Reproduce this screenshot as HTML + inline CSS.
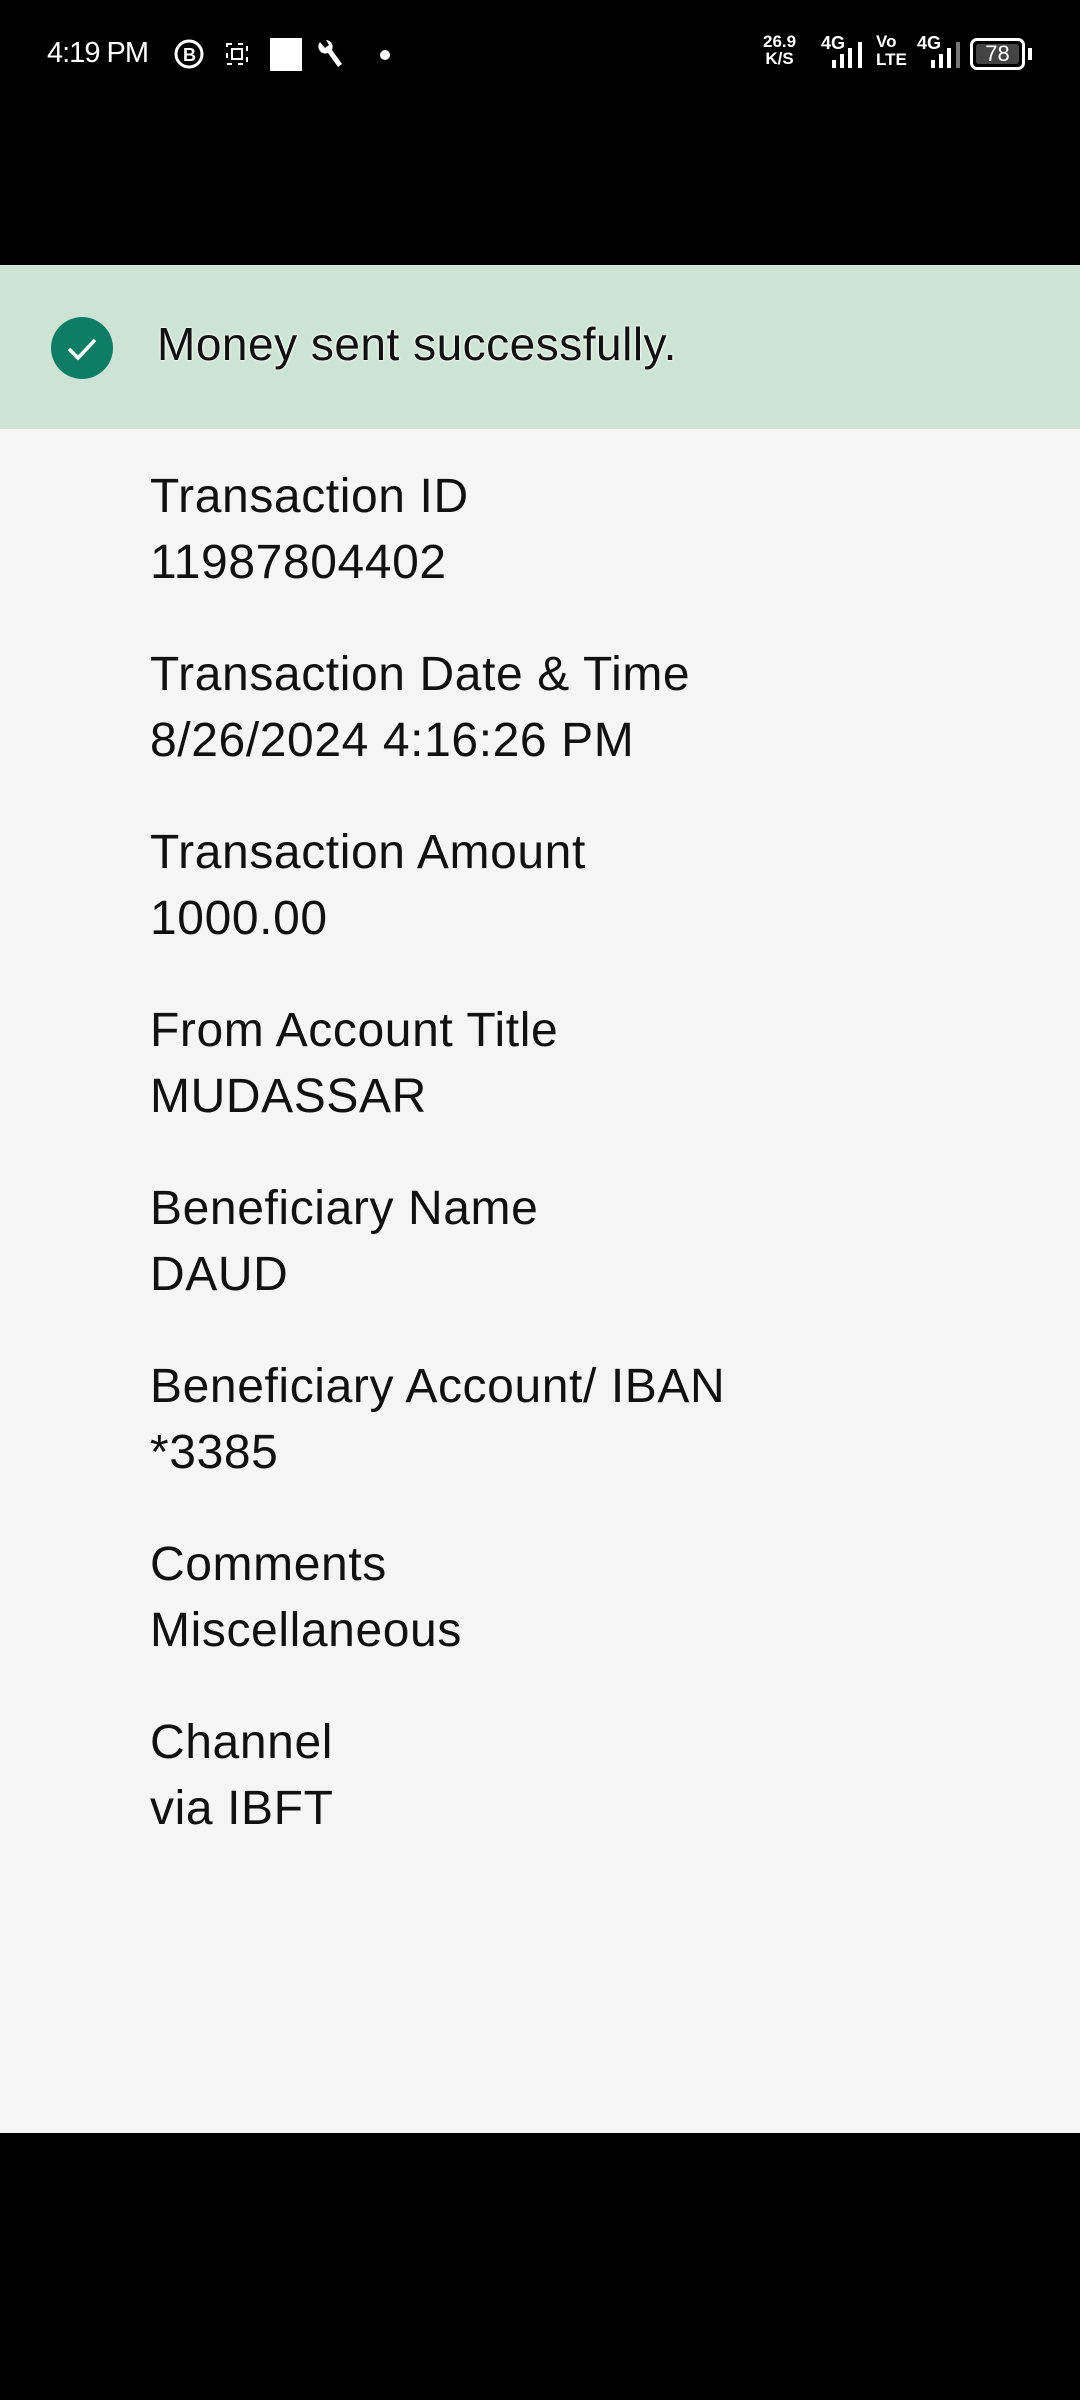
<!DOCTYPE html>
<html><head><meta charset="utf-8"><style>
*{margin:0;padding:0;box-sizing:border-box}
body{width:1080px;height:2400px;background:#000;position:relative;overflow:hidden;font-family:"Liberation Sans",sans-serif}
.sb{position:absolute;color:#fff}
.banner{position:absolute;left:0;top:265px;width:1080px;height:164px;background:#cde3d5}
.content{position:absolute;left:0;top:429px;width:1080px;height:1704px;background:#f5f5f5}
.msg{position:absolute;left:157px;top:317px;font-size:46px;color:#111;text-shadow:0 0 3px #fff,0 0 2px #fff;letter-spacing:0.5px}
.item{position:absolute;left:150px;font-size:48px;color:#111;line-height:66px;letter-spacing:0.6px}
</style></head><body>
<div class="sb" style="left:47px;top:37px;font-size:29px;letter-spacing:-1px">4:19 PM</div>
<svg class="sb" style="left:170px;top:38px" width="220" height="34" viewBox="0 0 220 34">
 <circle cx="19" cy="16" r="13" fill="none" stroke="#fff" stroke-width="3"/>
 <text x="13" y="23" font-size="18" font-weight="bold" fill="#fff" font-family="Liberation Sans">B</text>
 <rect x="57" y="6" width="20" height="20" fill="none" stroke="#fff" stroke-width="2" stroke-dasharray="5 6"/>
 <rect x="62" y="11" width="10" height="10" fill="none" stroke="#fff" stroke-width="2"/>
 <rect x="100" y="0" width="32" height="33" fill="#fff"/>
 <path d="M150 4 a7 7 0 0 0 8 11 l10 14 4 -3 -10 -14 a7 7 0 0 0 -6 -10 l3 5 -4 3z" fill="#fff"/>
 <circle cx="215" cy="17" r="5" fill="#fff"/>
</svg>
<div class="sb" style="left:763px;top:33px;font-size:17px;font-weight:bold;line-height:17px;text-align:center">26.9<br>K/S</div>
<div class="sb" style="left:821px;top:33px;font-size:18px;font-weight:bold">4G</div>
<svg class="sb" style="left:820px;top:40px" width="150" height="32">
 <rect x="12" y="20" width="4" height="8" fill="#fff"/><rect x="20" y="14" width="4" height="14" fill="#fff"/><rect x="28" y="8" width="4" height="20" fill="#fff"/><rect x="38" y="2" width="4" height="26" fill="#fff"/>
 <rect x="111" y="20" width="4" height="8" fill="#fff"/><rect x="119" y="14" width="4" height="14" fill="#fff"/><rect x="127" y="8" width="4" height="20" fill="#fff"/><rect x="136" y="2" width="4" height="26" fill="#777"/>
</svg>
<div class="sb" style="left:876px;top:33px;font-size:17px;font-weight:bold;line-height:18px">Vo<br>LTE</div>
<div class="sb" style="left:917px;top:33px;font-size:18px;font-weight:bold">4G</div>
<div class="sb" style="left:970px;top:38px;width:55px;height:32px;border:3px solid #fff;border-radius:7px;padding:3px">
 <div style="width:100%;height:100%;background:#444;border-radius:3px;color:#fff;font-size:22px;text-align:center;line-height:20px">78</div></div>
<div class="sb" style="left:1028px;top:48px;width:4px;height:12px;background:#fff"></div>

<div class="banner"></div>
<svg style="position:absolute;left:50px;top:316px" width="64" height="64"><circle cx="32" cy="32" r="31" fill="#0f7c66"/><path d="M19 33 l9 9 17 -18" fill="none" stroke="#fff" stroke-width="3.5"/></svg>
<div class="msg">Money sent successfully.</div>
<div class="content"></div>
<div class="item" style="top:464px">Transaction ID<br>11987804402</div>
<div class="item" style="top:642px">Transaction Date &amp; Time<br>8/26/2024 4:16:26 PM</div>
<div class="item" style="top:820px">Transaction Amount<br>1000.00</div>
<div class="item" style="top:998px">From Account Title<br>MUDASSAR</div>
<div class="item" style="top:1176px">Beneficiary Name<br>DAUD</div>
<div class="item" style="top:1354px">Beneficiary Account/ IBAN<br>*3385</div>
<div class="item" style="top:1532px">Comments<br>Miscellaneous</div>
<div class="item" style="top:1710px">Channel<br>via IBFT</div>
</body></html>
